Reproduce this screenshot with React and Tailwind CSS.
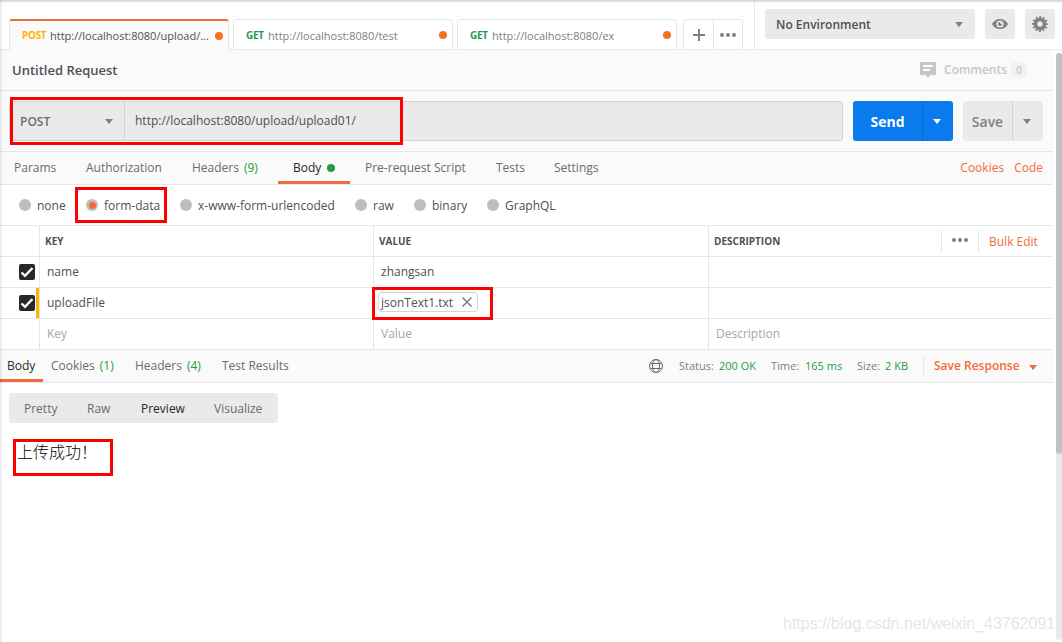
import clsx from "clsx";

const requestTabs = [
    { name: "Params", width: "w-[72px]" },
    { name: "Authorization", width: "w-[106px]" },
    { name: "Headers", count: "(9)", width: "w-[86px]" },
    { name: "Body", width: "w-[72px]", active: true },
    { name: "Pre-request Script", width: "w-[131px] pl-[15px]" },
    { name: "Tests", width: "w-[58px] pl-[15px]" },
    { name: "Settings", width: "w-[75px] pl-[15px]" },
];

const bodyTypes = [
    { name: "none", width: "w-[67px]" },
    { name: "form-data", width: "w-[94px]", checked: true },
    { name: "x-www-form-urlencoded", width: "w-[175px]" },
    { name: "raw", width: "w-[59px]" },
    { name: "binary", width: "w-[73px]" },
    { name: "GraphQL", width: "w-[80px]" },
];

function Caret({ className }) {
    return (
        <svg viewBox="0 0 8 5" className={clsx("h-[5px] w-2 shrink-0 fill-current", className)}>
            <path d="M0 0h8L4 5z" />
        </svg>
    );
}

function Dots({ className }) {
    return (
        <svg viewBox="0 0 16 4" className={clsx("h-1 w-4 fill-[#808080]", className)}>
            <circle cx="2" cy="2" r="2" />
            <circle cx="8" cy="2" r="2" />
            <circle cx="14" cy="2" r="2" />
        </svg>
    );
}

function FileTab({ method, url, active }) {
    return (
        <div
            className={clsx(
                "flex w-[220px] items-center rounded-t-[3px] border-x border-t border-[#e6e6e6] pr-[5px] pl-3 text-[11px]",
                active ? "h-[31px] border-t-2 border-t-[#f26b3a] bg-[#fafafa] text-[#505050]" : "h-[30px] bg-white text-[#808080]"
            )}
        >
            <span className={clsx("text-[10px] font-bold tracking-[-0.3px]", active ? "w-7 text-[#ffb400]" : "w-[22px] pt-0.5 text-[#249c47]")}>
                {method}
            </span>
            <span className={clsx("flex-1 whitespace-nowrap", active ? "mt-0.5" : "mt-[3px]")}>{url}</span>
            <span className="size-2 shrink-0 rounded-full bg-[#f47023]" />
        </div>
    );
}

function Checkbox() {
    return (
        <span className="flex size-4 items-center justify-center rounded-[2px] bg-[#282828]">
            <svg viewBox="0 0 16 16" className="size-4 fill-none stroke-white stroke-[2.4]">
                <path d="M2.500 8.500l3.500 3.300L13.500 4" />
            </svg>
        </span>
    );
}

function Row({ children, value, description, checked, muted, required }) {
    return (
        <div className={clsx("flex h-[31px] border-b border-[#e6e6e6]", muted ? "text-[#a6a6a6]" : "text-[#505050]")}>
            <div className="flex w-10 items-center justify-end border-r border-[#e6e6e6]">
                {checked && <Checkbox />}
                <span className={clsx("ml-[1px] h-[30px] w-[3px]", required && "bg-[#ffb400]")} />
            </div>
            <div className="flex w-[334px] items-center border-r border-[#e6e6e6] pl-[7px]">{children}</div>
            <div className="flex w-[335px] items-center border-r border-[#e6e6e6] pl-[7px]">{value}</div>
            <div className="flex flex-1 items-center pl-[7px]">{description}</div>
        </div>
    );
}

function Header() {
    return (
        <div className="flex h-[50px] items-end border-b border-[#e6e6e6] bg-white">
            <div className="-mb-px flex h-[31px] items-start gap-1 pl-[9px]">
                <FileTab active method="POST" url="http://localhost:8080/upload/..." />
                <FileTab method="GET" url="http://localhost:8080/test" />
                <FileTab method="GET" url="http://localhost:8080/ex" />
                <div className="ml-[2px] flex h-[30px] w-[60px] rounded-t-[3px] border-x border-t border-[#e6e6e6]">
                    <div className="flex w-[30px] items-center justify-center border-r border-[#e6e6e6]">
                        <svg viewBox="0 0 12 12" className="size-3 stroke-[#808080] stroke-2">
                            <path d="M6 0v12M0 6h12" />
                        </svg>
                    </div>
                    <div className="flex flex-1 items-center justify-center">
                        <Dots />
                    </div>
                </div>
            </div>

            <div className="ml-auto flex h-[49px] w-[308px] gap-[10px] border-l border-[#e6e6e6] pt-[9px] pl-[10px]">
                <div className="flex h-[30px] w-[210px] items-center justify-between rounded-[3px] bg-[#eaeaea] pr-3 pl-[11px] text-xs font-semibold text-[#505050]">
                    <span className="pt-0.5">No Environment</span>
                    <Caret className="text-[#808080]" />
                </div>
                <div className="flex size-[30px] items-center justify-center rounded-[3px] bg-[#eaeaea]">
                    <svg viewBox="0 0 16 10" className="h-[10px] w-4">
                        <path fill="#808080" d="M8 0C4.300 0 1.500 2 0 5c1.500 3 4.300 5 8 5s6.500-2 8-5C14.500 2 11.700 0 8 0z" />
                        <circle cx="8" cy="5" r="3.600" fill="#eaeaea" />
                        <circle cx="8" cy="5" r="2" fill="#808080" />
                        <circle cx="9" cy="4" r="1" fill="#eaeaea" />
                    </svg>
                </div>
                <div className="flex size-[30px] items-center justify-center rounded-[3px] bg-[#eaeaea]">
                    <svg viewBox="0 0 16 16" className="size-4">
                        <circle cx="8" cy="8" r="7" fill="none" stroke="#808080" strokeWidth="2" strokeDasharray="1.900 1.765" strokeDashoffset="0.950" />
                        <circle cx="8" cy="8" r="4.500" fill="none" stroke="#808080" strokeWidth="3.600" />
                    </svg>
                </div>
            </div>
        </div>
    );
}

function RequestBar() {
    return (
        <>
            <div className="flex h-[41px] items-center border-b border-[#e6e6e6] bg-[#fafafa] pr-[26px] pl-3">
                <span className="pt-0.5 text-[13px] font-semibold text-[#505050]">Untitled Request</span>
                <div className="ml-auto flex items-center text-[12px] font-semibold text-[#c6c6c6]">
                    <svg viewBox="0 0 16 16" className="mr-2 size-4">
                        <path fill="#c6c6c6" d="M0 0h16v13h-5.500L8 16l-2.500-3H0z" />
                        <path stroke="#fff" strokeWidth="2" d="M3 4h10M3 8h7" />
                    </svg>
                    Comments
                    <span className="ml-1 flex h-4 w-4 items-center justify-center rounded-[2px] bg-[#f2f2f2] pt-0.5 text-[10px]">0</span>
                </div>
            </div>

            <div className="flex h-[61px] border-b border-[#e6e6e6] bg-[#fafafa] pt-[10px] pl-[9px]">
                <div className="flex h-10 w-[834px] items-center rounded-[3px] border border-[#d4d4d4] bg-[#eaeaea] text-xs text-[#505050]">
                    <div className="flex h-full w-[115px] items-center justify-between border-r border-[#d4d4d4] pr-[11px] pl-[10px] font-semibold text-[#6b6b6b]">
                        <span className="pt-0.5">POST</span>
                        <Caret className="text-[#808080]" />
                    </div>
                    <span className="pl-[10px]">http://localhost:8080/upload/upload01/</span>
                </div>
                <div className="ml-[10px] flex h-10 w-[100px] items-center rounded-[3px] bg-[#097bed] text-white">
                    <span className="w-[69px] pt-0.5 text-center text-sm font-bold">Send</span>
                    <span className="flex h-full flex-1 items-center justify-center border-l border-[#0a6bce] pr-0.5">
                        <Caret />
                    </span>
                </div>
                <div className="ml-[10px] flex h-10 w-20 items-center rounded-[3px] bg-[#eaeaea] text-[#808080]">
                    <span className="w-[49px] pt-0.5 text-center text-sm font-semibold">Save</span>
                    <span className="flex h-full flex-1 items-center justify-center border-l border-[#d4d4d4] pr-0.5">
                        <Caret />
                    </span>
                </div>
            </div>
        </>
    );
}

function RequestTabs() {
    return (
        <div className="flex h-[33px] border-b border-[#e6e6e6] bg-[#fafafa] pl-[14px] text-[#6b6b6b]">
            {requestTabs.map((tab) => (
                <div
                    key={tab.name}
                    className={clsx(
                        "flex h-8 shrink-0 items-center whitespace-nowrap",
                        tab.width,
                        tab.active && "border-b-3 border-[#f26b3a] pt-[3px] pl-[15px] text-[#282828]"
                    )}
                >
                    {tab.name}
                    {tab.count && <span className="ml-[5px] text-[#249c47]">{tab.count}</span>}
                    {tab.active && <span className="ml-[6px] size-2 rounded-full bg-[#249c47]" />}
                </div>
            ))}
            <div className="ml-auto flex h-8 items-center gap-[10px] pr-[10px] text-[#f26b3a]">
                <span>Cookies</span>
                <span>Code</span>
            </div>
        </div>
    );
}

function BodyEditor() {
    return (
        <>
            <div className="flex h-[41px] items-center border-b border-[#e6e6e6] pl-[19px] text-[#505050]">
                {bodyTypes.map((type) => (
                    <div key={type.name} className={clsx("flex shrink-0 items-center whitespace-nowrap", type.width)}>
                        <span className="mr-[6px] flex size-3 items-center justify-center rounded-full bg-[#bebebe]">
                            {type.checked && <span className="size-[7px] rounded-full bg-[#f26b3a]" />}
                        </span>
                        <span className="pt-0.5">{type.name}</span>
                    </div>
                ))}
            </div>

            <div className="flex h-[31px] items-stretch border-b border-[#e6e6e6] text-[10px] font-bold text-[#505050]">
                <div className="w-10 border-r border-[#e6e6e6]" />
                <div className="flex w-[334px] items-center border-r border-[#e6e6e6] pt-0.5 pl-[5px]">KEY</div>
                <div className="flex w-[335px] items-center border-r border-[#e6e6e6] pt-0.5 pl-[5px]">VALUE</div>
                <div className="flex flex-1 items-center pl-[5px]">
                    <span className="pt-0.5">DESCRIPTION</span>
                    <div className="ml-auto flex h-[22px] w-[38px] items-center border-x border-[#e6e6e6] pb-0.5 pl-[10px]">
                        <Dots />
                    </div>
                    <span className="w-[74px] pt-0.5 pl-[10px] text-xs font-normal text-[#f26b3a]">Bulk Edit</span>
                </div>
            </div>
            <Row checked value="zhangsan">name</Row>
            <Row
                checked
                required
                value={
                    <span className="mb-0.5 -ml-[3px] flex h-5 w-[100px] items-center justify-between rounded-[3px] border border-[#d4d4d4] pr-[5px] pl-[2px]">
                        <span className="pt-0.5">jsonText1.txt</span>
                        <svg viewBox="0 0 10 10" className="size-[10px] stroke-[#808080] stroke-[1.5]">
                            <path d="M0.500 0.500l9 9M9.500 0.500l-9 9" />
                        </svg>
                    </span>
                }
            >
                uploadFile
            </Row>
            <Row muted value="Value" description="Description">Key</Row>
        </>
    );
}

function ResponsePanel() {
    return (
        <>
            <div className="flex h-[33px] border-b border-[#e6e6e6] bg-[#fafafa] text-[#6b6b6b]">
                <div className="flex h-8 w-[43px] items-center border-b-3 border-[#f26b3a] pt-[3px] pl-[7px] text-[#282828]">Body</div>
                <div className="flex h-8 w-[84px] items-center gap-[5px] pl-2">
                    Cookies <span className="text-[#249c47]">(1)</span>
                </div>
                <div className="flex h-8 w-[87px] items-center gap-[5px] pl-2">
                    Headers <span className="text-[#249c47]">(4)</span>
                </div>
                <div className="flex h-8 items-center pl-2">Test Results</div>

                <div className="ml-auto flex h-8 items-center text-[11px] whitespace-nowrap text-[#808080]">
                    <svg viewBox="0 0 14 14" className="mr-4 size-[14px] fill-none stroke-[#6b6b6b]">
                        <circle cx="7" cy="7" r="6.500" />
                        <ellipse cx="7" cy="7" rx="3.500" ry="6.500" />
                        <path d="M1.500 4.500h11M1.500 9.500h11" />
                    </svg>
                    <span className="w-10">Status:</span>
                    <span className="w-[52px] text-[#249c47]">200 OK</span>
                    <span className="w-[34px]">Time:</span>
                    <span className="w-[52px] text-[#249c47]">165 ms</span>
                    <span className="w-7">Size:</span>
                    <span className="w-[38px] text-[#249c47]">2 KB</span>
                    <span className="flex h-5 w-[130px] items-center border-l border-[#e6e6e6] pl-[10px] text-xs font-semibold text-[#f26b3a]">
                        Save Response
                        <Caret className="mt-[2px] ml-[9px]" />
                    </span>
                </div>
            </div>

            <div className="mt-[10px] ml-[9px] flex h-[30px] w-[269px] items-center rounded-[3px] bg-[#eaeaea] pt-0.5 pl-[15px] text-[#6b6b6b]">
                <span className="w-[63px]">Pretty</span>
                <span className="w-[54px]">Raw</span>
                <span className="w-[73px] text-[#282828]">Preview</span>
                <span>Visualize</span>
            </div>
            <p className="mt-4 pl-[17px] font-['Noto_Sans_CJK_SC',sans-serif] text-base leading-6 font-light text-black">上传成功！</p>
        </>
    );
}

export default function App() {
    return (
        <div className="relative flex h-[642px] w-[1062px] flex-col overflow-hidden bg-white font-['Open_Sans',sans-serif] text-xs">
            <Header />
            <div className="flex flex-1">
                <div className="w-[1053px]">
                    <RequestBar />
                    <RequestTabs />
                    <BodyEditor />
                    <ResponsePanel />
                </div>
                <div className="mt-[3px] mb-[2px] ml-[3px] w-[6px] rounded-[3px] bg-[#eaeaea]">
                    <div className="h-[401px] rounded-[3px] bg-[#c1c1c1]" />
                </div>
            </div>

            {/* window edge shadows */}
            <div className="absolute inset-x-0 top-0 h-[3px] bg-linear-to-b from-[#cfcfcf] to-transparent" />
            <div className="absolute inset-y-0 left-0 w-[3px] bg-linear-to-r from-black/10 to-transparent" />

            {/* highlighted areas */}
            <div className="absolute top-[97px] left-[10px] h-12 w-[393px] border-3 border-[#ff0000]" />
            <div className="absolute top-[187px] left-[75px] h-9 w-[92px] border-3 border-[#ff0000]" />
            <div className="absolute top-[287px] left-[372px] h-[33px] w-[121px] border-3 border-[#ff0000]" />
            <div className="absolute top-[439px] left-[13px] h-[37px] w-[100px] border-3 border-[#ff0000]" />

            <span className="absolute top-[614px] left-[783px] font-['Liberation_Sans',sans-serif] text-base leading-5 text-[#e6e6e6]">
                https://blog.csdn.net/weixin_43762091
            </span>
        </div>
    );
}
